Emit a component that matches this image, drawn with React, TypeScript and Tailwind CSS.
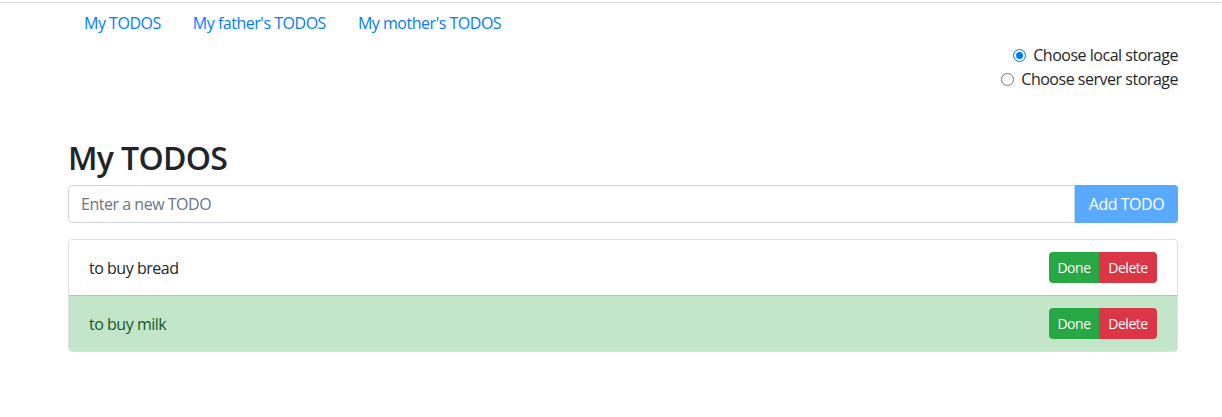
import React, { useState } from 'react';

type Todo = { id: number; text: string; done: boolean };

const tabs = ["My TODOS", "My father's TODOS", "My mother's TODOS"];

const initialTodos: Todo[] = [
  { id: 1, text: 'to buy bread', done: false },
  { id: 2, text: 'to buy milk', done: true },
];

function Radio({ checked, label, onChange }: { checked: boolean; label: string; onChange: () => void }) {
  return (
    <label className="flex h-6 items-center justify-end">
      <span
        className={
          checked
            ? 'mr-[7px] flex h-[13px] w-[13px] items-center justify-center rounded-full border border-[#0075ff] bg-white'
            : 'mr-[7px] flex h-[13px] w-[13px] items-center justify-center rounded-full border border-[#767676] bg-white'
        }
        onClick={onChange}
      >
        {checked && <span className="h-[7px] w-[7px] rounded-full bg-[#0075ff]" />}
      </span>
      <span>{label}</span>
    </label>
  );
}

export default function App() {
  const [todos, setTodos] = useState<Todo[]>(initialTodos);
  const [storage, setStorage] = useState<'local' | 'server'>('local');
  const [text, setText] = useState('');

  return (
    <div
      className="min-h-[417px] bg-white text-[16px] tracking-[-0.03em] text-[#212529]"
      style={{ fontFamily: '"Open Sans", "Noto Sans", sans-serif' }}
    >
      <div className="h-[2px]" />
      <div className="h-px bg-[#dcdcdc]" />
      <div className="ml-[68px] w-[1110px]">
        <nav className="flex h-10 items-center">
          {tabs.map((t) => (
            <a key={t} href="#" className="px-4 leading-6 text-[#007bff]">
              {t}
            </a>
          ))}
        </nav>
        <div className="flex flex-col items-end">
          <Radio checked={storage === 'local'} label="Choose local storage" onChange={() => setStorage('local')} />
          <Radio checked={storage === 'server'} label="Choose server storage" onChange={() => setStorage('server')} />
        </div>

        <h2 className="mt-[48px] mb-2 text-[32px] font-semibold leading-[38px] tracking-[-0.02em]">My TODOS</h2>

        <div className="flex h-[38px]">
          <input
            className="h-[38px] flex-1 rounded-l border border-[#ced4da] px-3 text-[16px] tracking-[-0.03em] text-[#495057] outline-none placeholder:text-[#6c757d]"
            placeholder="Enter a new TODO"
            value={text}
            onChange={(e) => setText(e.target.value)}
          />
          <button className="h-[38px] w-[103px] rounded-r bg-[#59a9ff] text-white">Add TODO</button>
        </div>

        <ul className="mt-4 overflow-hidden rounded border border-black/[0.125]">
          {todos.map((t, i) => (
            <li
              key={t.id}
              className={
                (t.done ? 'bg-[#c3e6cb] text-[#155724] ' : 'bg-white ') +
                (i > 0 ? 'h-[56px] border-t border-black/[0.125] ' : 'h-[55px] ') +
                'flex items-center justify-between pr-5 pl-5'
              }
            >
              <span>{t.text}</span>
              <div className="flex">
                <button
                  className="h-[31px] w-[50px] rounded-l bg-[#28a745] text-[14px] text-white"
                  onClick={() => setTodos(todos.map((x) => (x.id === t.id ? { ...x, done: !x.done } : x)))}
                >
                  Done
                </button>
                <button
                  className="h-[31px] w-[58px] rounded-r bg-[#dc3545] text-[14px] text-white"
                  onClick={() => setTodos(todos.filter((x) => x.id !== t.id))}
                >
                  Delete
                </button>
              </div>
            </li>
          ))}
        </ul>
      </div>
    </div>
  );
}
